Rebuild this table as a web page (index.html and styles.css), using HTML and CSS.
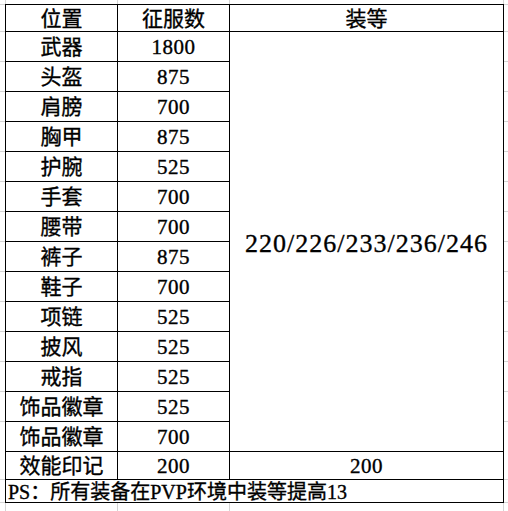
FILE: index.html
```html
<!DOCTYPE html>
<html lang="zh-CN">
<head>
<meta charset="utf-8">
<title>装等表</title>
<link rel="stylesheet" href="styles.css">
</head>
<body>
<div class="sheet">
  <div class="table">
    <div class="cell head">位置</div>
    <div class="cell head">征服数</div>
    <div class="cell head">装等</div>

    <div class="cell">武器</div><div class="cell num">1800</div>
    <div class="cell merged">220/226/233/236/246</div>
    <div class="cell">头盔</div><div class="cell num">875</div>
    <div class="cell">肩膀</div><div class="cell num">700</div>
    <div class="cell">胸甲</div><div class="cell num">875</div>
    <div class="cell">护腕</div><div class="cell num">525</div>
    <div class="cell">手套</div><div class="cell num">700</div>
    <div class="cell">腰带</div><div class="cell num">700</div>
    <div class="cell">裤子</div><div class="cell num">875</div>
    <div class="cell">鞋子</div><div class="cell num">700</div>
    <div class="cell">项链</div><div class="cell num">525</div>
    <div class="cell">披风</div><div class="cell num">525</div>
    <div class="cell">戒指</div><div class="cell num">525</div>
    <div class="cell">饰品徽章</div><div class="cell num">525</div>
    <div class="cell">饰品徽章</div><div class="cell num">700</div>
    <div class="cell">效能印记</div><div class="cell num">200</div><div class="cell num">200</div>

    <div class="cell note">PS：所有装备在PVP环境中装等提高13</div>
  </div>
</div>
</body>
</html>
```
FILE: styles.css
```css
html, body {
  margin: 0;
  padding: 0;
  background: #ffffff;
}

.sheet {
  width: 508px;
  height: 511px;
  box-sizing: border-box;
  padding: 4px 3px 0 5px;
  background-color: #ffffff;
  background-image:
    linear-gradient(to right, transparent 5px, #d4d4d4 5px, #d4d4d4 6px, transparent 6px),
    linear-gradient(to right, transparent 117px, #d4d4d4 117px, #d4d4d4 118px, transparent 118px),
    linear-gradient(to right, transparent 229px, #d4d4d4 229px, #d4d4d4 230px, transparent 230px),
    linear-gradient(to right, transparent 503px, #d4d4d4 503px, #d4d4d4 504px, transparent 504px),
    linear-gradient(to bottom, transparent 4px, #d4d4d4 4px, #d4d4d4 5px, transparent 5px),
    linear-gradient(to bottom, transparent 479px, #d4d4d4 479px, #d4d4d4 480px, transparent 480px),
    linear-gradient(to bottom, transparent 502px, #d4d4d4 502px, #d4d4d4 503px, transparent 503px),
    repeating-linear-gradient(to bottom, transparent 0, transparent 29px, #d4d4d4 29px, #d4d4d4 30px);
  background-size: 100% 100%, 100% 100%, 100% 100%, 100% 100%, 100% 100%, 100% 100%, 100% 100%, 100% 421px;
  background-position: 0 0, 0 0, 0 0, 0 0, 0 0, 0 0, 0 0, 0 2px;
  background-repeat: no-repeat;
}

.table {
  display: grid;
  grid-template-columns: 112px 112px 274px;
  grid-template-rows: 27px repeat(14, 30px) 28px 23px;
  width: 499px;
  box-sizing: border-box;
  border-left: 1px solid #000;
  border-top: 1px solid #000;
  background: #ffffff;
  font-family: "Liberation Serif", "Noto Sans CJK SC", serif;
  font-size: 21px;
  color: #000;
  -webkit-text-stroke: 0.35px #000;
}

.cell {
  box-sizing: border-box;
  border-right: 1px solid #000;
  border-bottom: 1px solid #000;
  display: flex;
  align-items: center;
  justify-content: center;
  padding-top: 2px;
  line-height: 1;
  white-space: nowrap;
}

.num {
  letter-spacing: 0.5px;
}

.merged {
  grid-column: 3;
  grid-row: 2 / span 14;
  font-size: 26px;
  letter-spacing: 1px;
  padding-top: 4px;
}

.note {
  grid-column: 1 / span 3;
  justify-content: flex-start;
  padding-left: 2px;
  font-size: 20px;
  padding-top: 1px;
}
```
